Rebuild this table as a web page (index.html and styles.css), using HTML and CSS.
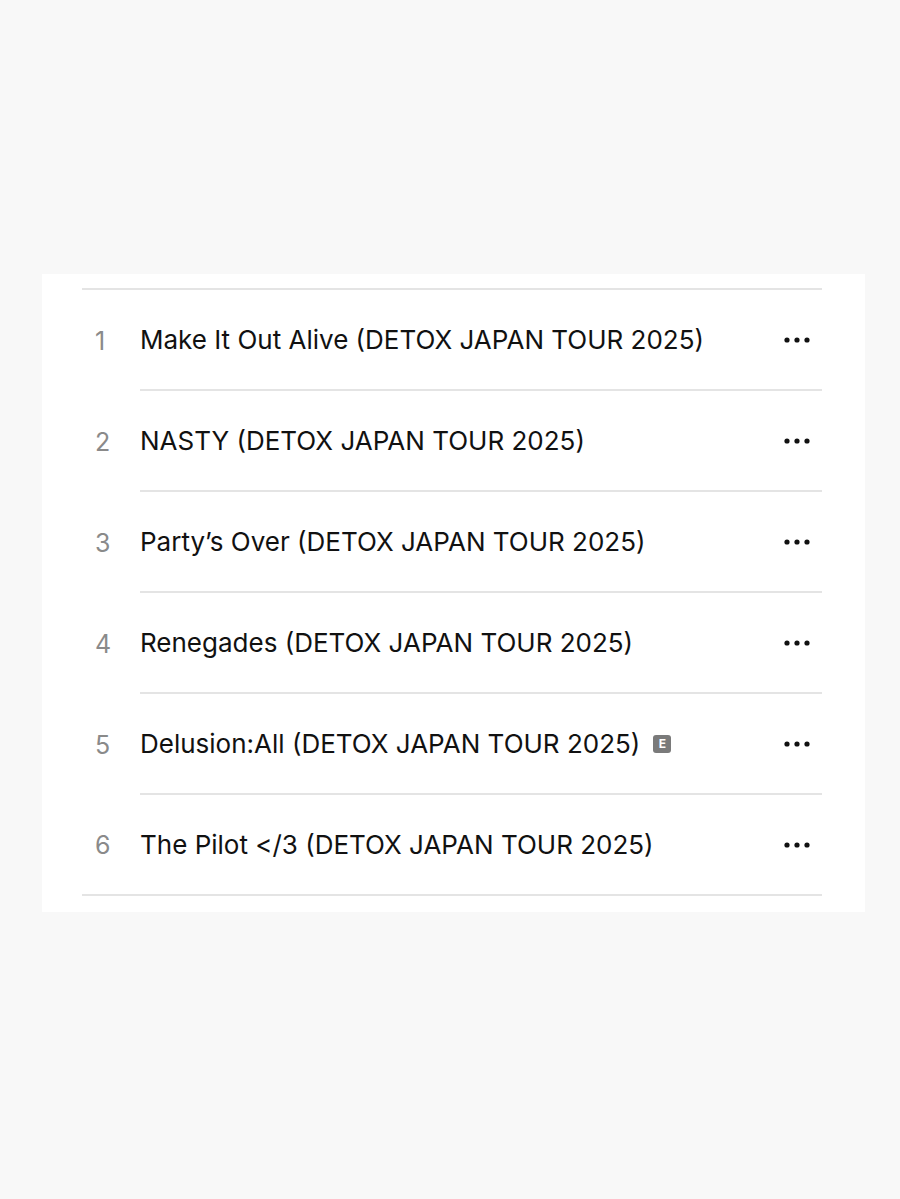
FILE: index.html
```html
<!DOCTYPE html>
<html lang="en">
<head>
    <meta charset="UTF-8">
    <title>DETOX JAPAN TOUR 2025</title>
    <link rel="stylesheet" href="styles.css">
</head>
<body>
    <div class="card">
        <ul class="tracks">
            <li class="track">
                <span class="num">1</span>
                <div class="main">
                    <span class="title">Make It Out Alive (DETOX JAPAN TOUR 2025)</span>
                    <svg class="more" width="26" height="6" viewBox="0 0 26 6"><circle cx="3" cy="3" r="2.6"/><circle cx="13" cy="3" r="2.6"/><circle cx="23" cy="3" r="2.6"/></svg>
                </div>
            </li>
            <li class="track">
                <span class="num">2</span>
                <div class="main">
                    <span class="title">NASTY (DETOX JAPAN TOUR 2025)</span>
                    <svg class="more" width="26" height="6" viewBox="0 0 26 6"><circle cx="3" cy="3" r="2.6"/><circle cx="13" cy="3" r="2.6"/><circle cx="23" cy="3" r="2.6"/></svg>
                </div>
            </li>
            <li class="track">
                <span class="num">3</span>
                <div class="main">
                    <span class="title">Party’s Over (DETOX JAPAN TOUR 2025)</span>
                    <svg class="more" width="26" height="6" viewBox="0 0 26 6"><circle cx="3" cy="3" r="2.6"/><circle cx="13" cy="3" r="2.6"/><circle cx="23" cy="3" r="2.6"/></svg>
                </div>
            </li>
            <li class="track">
                <span class="num">4</span>
                <div class="main">
                    <span class="title">Renegades (DETOX JAPAN TOUR 2025)</span>
                    <svg class="more" width="26" height="6" viewBox="0 0 26 6"><circle cx="3" cy="3" r="2.6"/><circle cx="13" cy="3" r="2.6"/><circle cx="23" cy="3" r="2.6"/></svg>
                </div>
            </li>
            <li class="track">
                <span class="num">5</span>
                <div class="main">
                    <span class="title">Delusion:All (DETOX JAPAN TOUR 2025) <span class="explicit">E</span></span>
                    <svg class="more" width="26" height="6" viewBox="0 0 26 6"><circle cx="3" cy="3" r="2.6"/><circle cx="13" cy="3" r="2.6"/><circle cx="23" cy="3" r="2.6"/></svg>
                </div>
            </li>
            <li class="track">
                <span class="num">6</span>
                <div class="main">
                    <span class="title">The Pilot &lt;/3 (DETOX JAPAN TOUR 2025)</span>
                    <svg class="more" width="26" height="6" viewBox="0 0 26 6"><circle cx="3" cy="3" r="2.6"/><circle cx="13" cy="3" r="2.6"/><circle cx="23" cy="3" r="2.6"/></svg>
                </div>
            </li>
        </ul>
    </div>
</body>
</html>
```

FILE: styles.css
```css
body {
    margin: 0;
    background: #f8f8f8;
    font-family: Inter, "Liberation Sans", Arial, sans-serif;
    color: #111;
}
.card {
    background: #fff;
    width: 823px;
    margin: 274px 0 0 42px;
    padding: 14px 43px 16px 40px;
    box-sizing: border-box;
}
.tracks {
    list-style: none;
    margin: 0;
    padding: 0;
    border-top: 2px solid #e4e4e4;
    border-bottom: 2px solid #e4e4e4;
}
.track {
    display: flex;
    height: 101px;
}
.track:last-child { height: 99px; }
.num {
    width: 58px;
    padding-left: 13px;
    box-sizing: border-box;
    display: flex;
    align-items: center;
    font-size: 25px;
    color: #8a8a8a;
}
.main {
    flex: 1;
    display: flex;
    align-items: center;
    justify-content: space-between;
    border-bottom: 2px solid #e4e4e4;
    padding-right: 12px;
}
.track:last-child .main { border-bottom: none; }
.title {
    font-size: 26px;
    display: flex;
    align-items: center;
    gap: 13px;
}
.explicit {
    display: inline-flex;
    align-items: center;
    justify-content: center;
    width: 18px;
    height: 18px;
    border-radius: 3px;
    background: #7a7a7a;
    color: #fff;
    font-size: 12px;
    font-weight: bold;
}
.more { fill: #111; }
```
